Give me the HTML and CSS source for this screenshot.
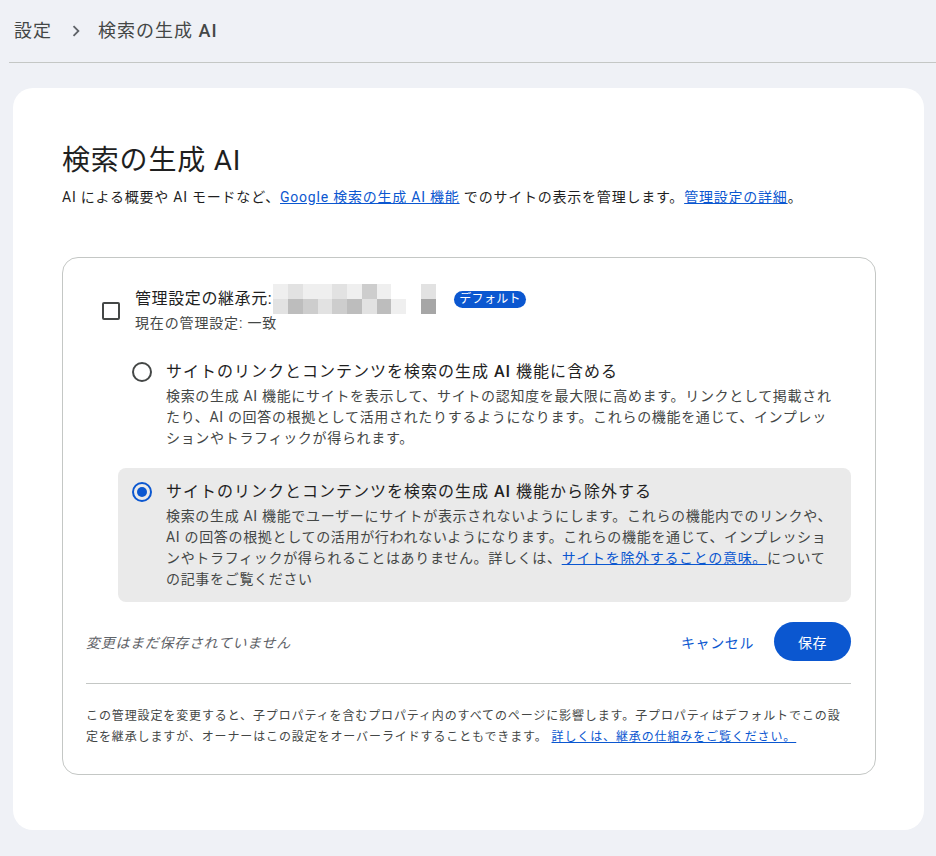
FILE: index.html
```html
<!DOCTYPE html>
<html lang="ja">
<head>
<meta charset="utf-8">
<title>検索の生成 AI</title>
<link rel="stylesheet" href="styles.css">
</head>
<body>
<header class="topbar">
  <nav class="crumbs">
    <span class="crumb">設定</span>
    <svg class="chev" viewBox="0 0 24 24" width="22" height="22"><path d="M10 6L8.59 7.41 13.17 12l-4.58 4.59L10 18l6-6z" fill="#5f6368"/></svg>
    <span class="crumb">検索の生成 <span class="lat">AI</span></span>
  </nav>
</header>
<main class="card">
  <h1 class="title">検索の生成 AI</h1>
  <p class="lead">AI による概要や AI モードなど、<a href="#" class="link">Google 検索の生成 AI 機能</a> でのサイトの表示を管理します。<a href="#" class="link">管理設定の詳細</a>。</p>

  <section class="panel">
    <div class="inherit">
      <span class="checkbox"></span>
      <div class="inherit-text">
        <div class="inherit-title">管理設定の継承元:<span class="mosaic"><i class="m1"></i><i class="m2"></i><i class="m1"></i><i class="m1"></i><i class="m2"></i><i class="m1"></i><i class="m3"></i><i class="m1"></i><i class="m0"></i><i class="m0"></i><i class="m2"></i><i class="m0"></i><i class="m2"></i><i class="m4"></i><i class="m3"></i><i class="m2"></i><i class="m3"></i><i class="m4"></i><i class="m2"></i><i class="m4"></i><i class="m1"></i><i class="m0"></i><i class="m5"></i><i class="m0"></i></span><span class="badge">デフォルト</span></div>
        <div class="inherit-sub">現在の管理設定: 一致</div>
      </div>
    </div>

    <div class="options">
      <div class="option">
        <span class="radio"></span>
        <div class="option-text">
          <div class="option-title">サイトのリンクとコンテンツを検索の生成 <span class="lat">AI</span> 機能に含める</div>
          <div class="option-desc">検索の生成 AI 機能にサイトを表示して、サイトの認知度を最大限に高めます。リンクとして掲載されたり、AI の回答の根拠として活用されたりするようになります。これらの機能を通じて、インプレッションやトラフィックが得られます。</div>
        </div>
      </div>
      <div class="option selected">
        <span class="radio on"></span>
        <div class="option-text">
          <div class="option-title">サイトのリンクとコンテンツを検索の生成 <span class="lat">AI</span> 機能から除外する</div>
          <div class="option-desc">検索の生成 AI 機能でユーザーにサイトが表示されないようにします。これらの機能内でのリンクや、AI の回答の根拠としての活用が行われないようになります。これらの機能を通じて、インプレッションやトラフィックが得られることはありません。詳しくは、<a href="#" class="link">サイトを除外することの意味。</a>についての記事をご覧ください</div>
        </div>
      </div>
    </div>

    <div class="actions">
      <span class="unsaved">変更はまだ保存されていません</span>
      <div class="buttons">
        <button class="btn-text">キャンセル</button>
        <button class="btn-primary">保存</button>
      </div>
    </div>
    <hr class="divider">
    <p class="note">この管理設定を変更すると、子プロパティを含むプロパティ内のすべてのページに影響します。子プロパティはデフォルトでこの設定を継承しますが、オーナーはこの設定をオーバーライドすることもできます。 <a href="#" class="link">詳しくは、継承の仕組みをご覧ください。</a></p>
  </section>
</main>
</body>
</html>
```

FILE: styles.css
```css
* { box-sizing: border-box; }
html, body { margin: 0; padding: 0; }
body {
  background: #eff1f6;
  font-family: "Roboto", "Noto Sans CJK JP", sans-serif;
  color: #1f1f1f;
  width: 936px;
  height: 856px;
  overflow: hidden;
}
.lat { font-weight: 500; }

.topbar {
  margin-left: 9px;
  height: 63px;
  border-bottom: 1px solid #c4c7c5;
  padding: 19px 0 0 5px;
}
.crumbs {
  display: flex;
  align-items: center;
  font-size: 18px;
  line-height: 24px;
  letter-spacing: 1px;
  color: #444746;
}
.chev { margin: 0 11px 0 13px; flex: none; }

.card {
  margin: 25px 12px 0 13px;
  width: 911px;
  background: #fff;
  border-radius: 20px;
  padding: 55px 48px 55px 49px;
}
.title {
  margin: 0;
  font-size: 28px;
  line-height: 36px;
  font-weight: 400;
  letter-spacing: 0.8px;
  color: #1f1f1f;
}
.lead {
  margin: 8px 0 0;
  font-size: 14px;
  line-height: 20px;
  letter-spacing: 0.78px;
  color: #1f1f1f;
}
.link { color: #0b57d0; text-decoration: underline; }

.panel {
  margin-top: 50px;
  border: 1px solid #c4c7c5;
  border-radius: 16px;
  padding: 29px 24px 26px 23px;
}

.inherit {
  display: flex;
  align-items: center;
  margin-left: 16px;
}
.checkbox {
  width: 18px;
  height: 18px;
  border: 2px solid #444746;
  border-radius: 2px;
  flex: none;
  margin-right: 15px;
}
.inherit-title {
  font-size: 16px;
  line-height: 24px;
  height: 24px;
  letter-spacing: 0.6px;
  color: #1f1f1f;
  display: flex;
  align-items: center;
}
.mosaic {
  display: grid;
  grid-template-columns: repeat(12, 1fr);
  grid-template-rows: 15px 15px;
  width: 177px;
  height: 30px;
  margin: -3px 0 -3px 1px;
}
.mosaic i { display: block; }
.m0 { background: #ffffff; }
.m1 { background: #efefef; }
.m2 { background: #e2e2e2; }
.m3 { background: #cdcdcd; }
.m4 { background: #bdbdbd; }
.m5 { background: #a6a6a6; }
.badge {
  margin-left: 4px;
  background: #0b57d0;
  color: #fff;
  font-size: 12px;
  line-height: 17px;
  letter-spacing: 0.3px;
  padding: 0 5px;
  border-radius: 9px;
}
.inherit-sub {
  margin-top: 1px;
  font-size: 14px;
  line-height: 22px;
  letter-spacing: 0.85px;
  color: #444746;
}

.options {
  margin-top: 14px;
  margin-left: 32px;
  display: flex;
  flex-direction: column;
  gap: 7px;
}
.option {
  display: flex;
  align-items: flex-start;
  padding: 12px 14px;
  border-radius: 8px;
}
.option.selected { background: #eaeaea; }
.radio {
  flex: none;
  width: 20px;
  height: 20px;
  border: 2px solid #444746;
  border-radius: 50%;
  margin: 2px 14px 0 0;
  display: flex;
  align-items: center;
  justify-content: center;
}
.radio.on { border-color: #0b57d0; }
.radio.on::after {
  content: "";
  width: 10px;
  height: 10px;
  border-radius: 50%;
  background: #0b57d0;
}
.option-text { flex: 1; min-width: 0; }
.option-title {
  font-size: 16px;
  line-height: 24px;
  letter-spacing: 1px;
  color: #1f1f1f;
}
.option-desc {
  margin-top: 2px;
  font-size: 14px;
  line-height: 21px;
  letter-spacing: 0.68px;
  color: #444746;
}

.actions {
  margin-top: 20px;
  display: flex;
  align-items: center;
  justify-content: space-between;
}
.unsaved {
  font-size: 14px;
  font-style: italic;
  letter-spacing: 0.7px;
  color: #5f6368;
}
.buttons { display: flex; align-items: center; gap: 20px; }
.btn-text {
  border: none;
  background: none;
  font-family: inherit;
  font-size: 14px;
  letter-spacing: 0.6px;
  color: #0b57d0;
  padding: 0;
}
.btn-primary {
  border: none;
  background: #0b57d0;
  color: #fff;
  font-family: inherit;
  font-size: 14px;
  letter-spacing: 0.5px;
  height: 39px;
  padding: 0 24px;
  border-radius: 20px;
}
.divider {
  margin: 22px 0 0;
  border: none;
  border-top: 1px solid #c4c7c5;
}
.note {
  margin: 22px 0 0;
  font-size: 12px;
  line-height: 21px;
  letter-spacing: 0.88px;
  color: #444746;
}
```
